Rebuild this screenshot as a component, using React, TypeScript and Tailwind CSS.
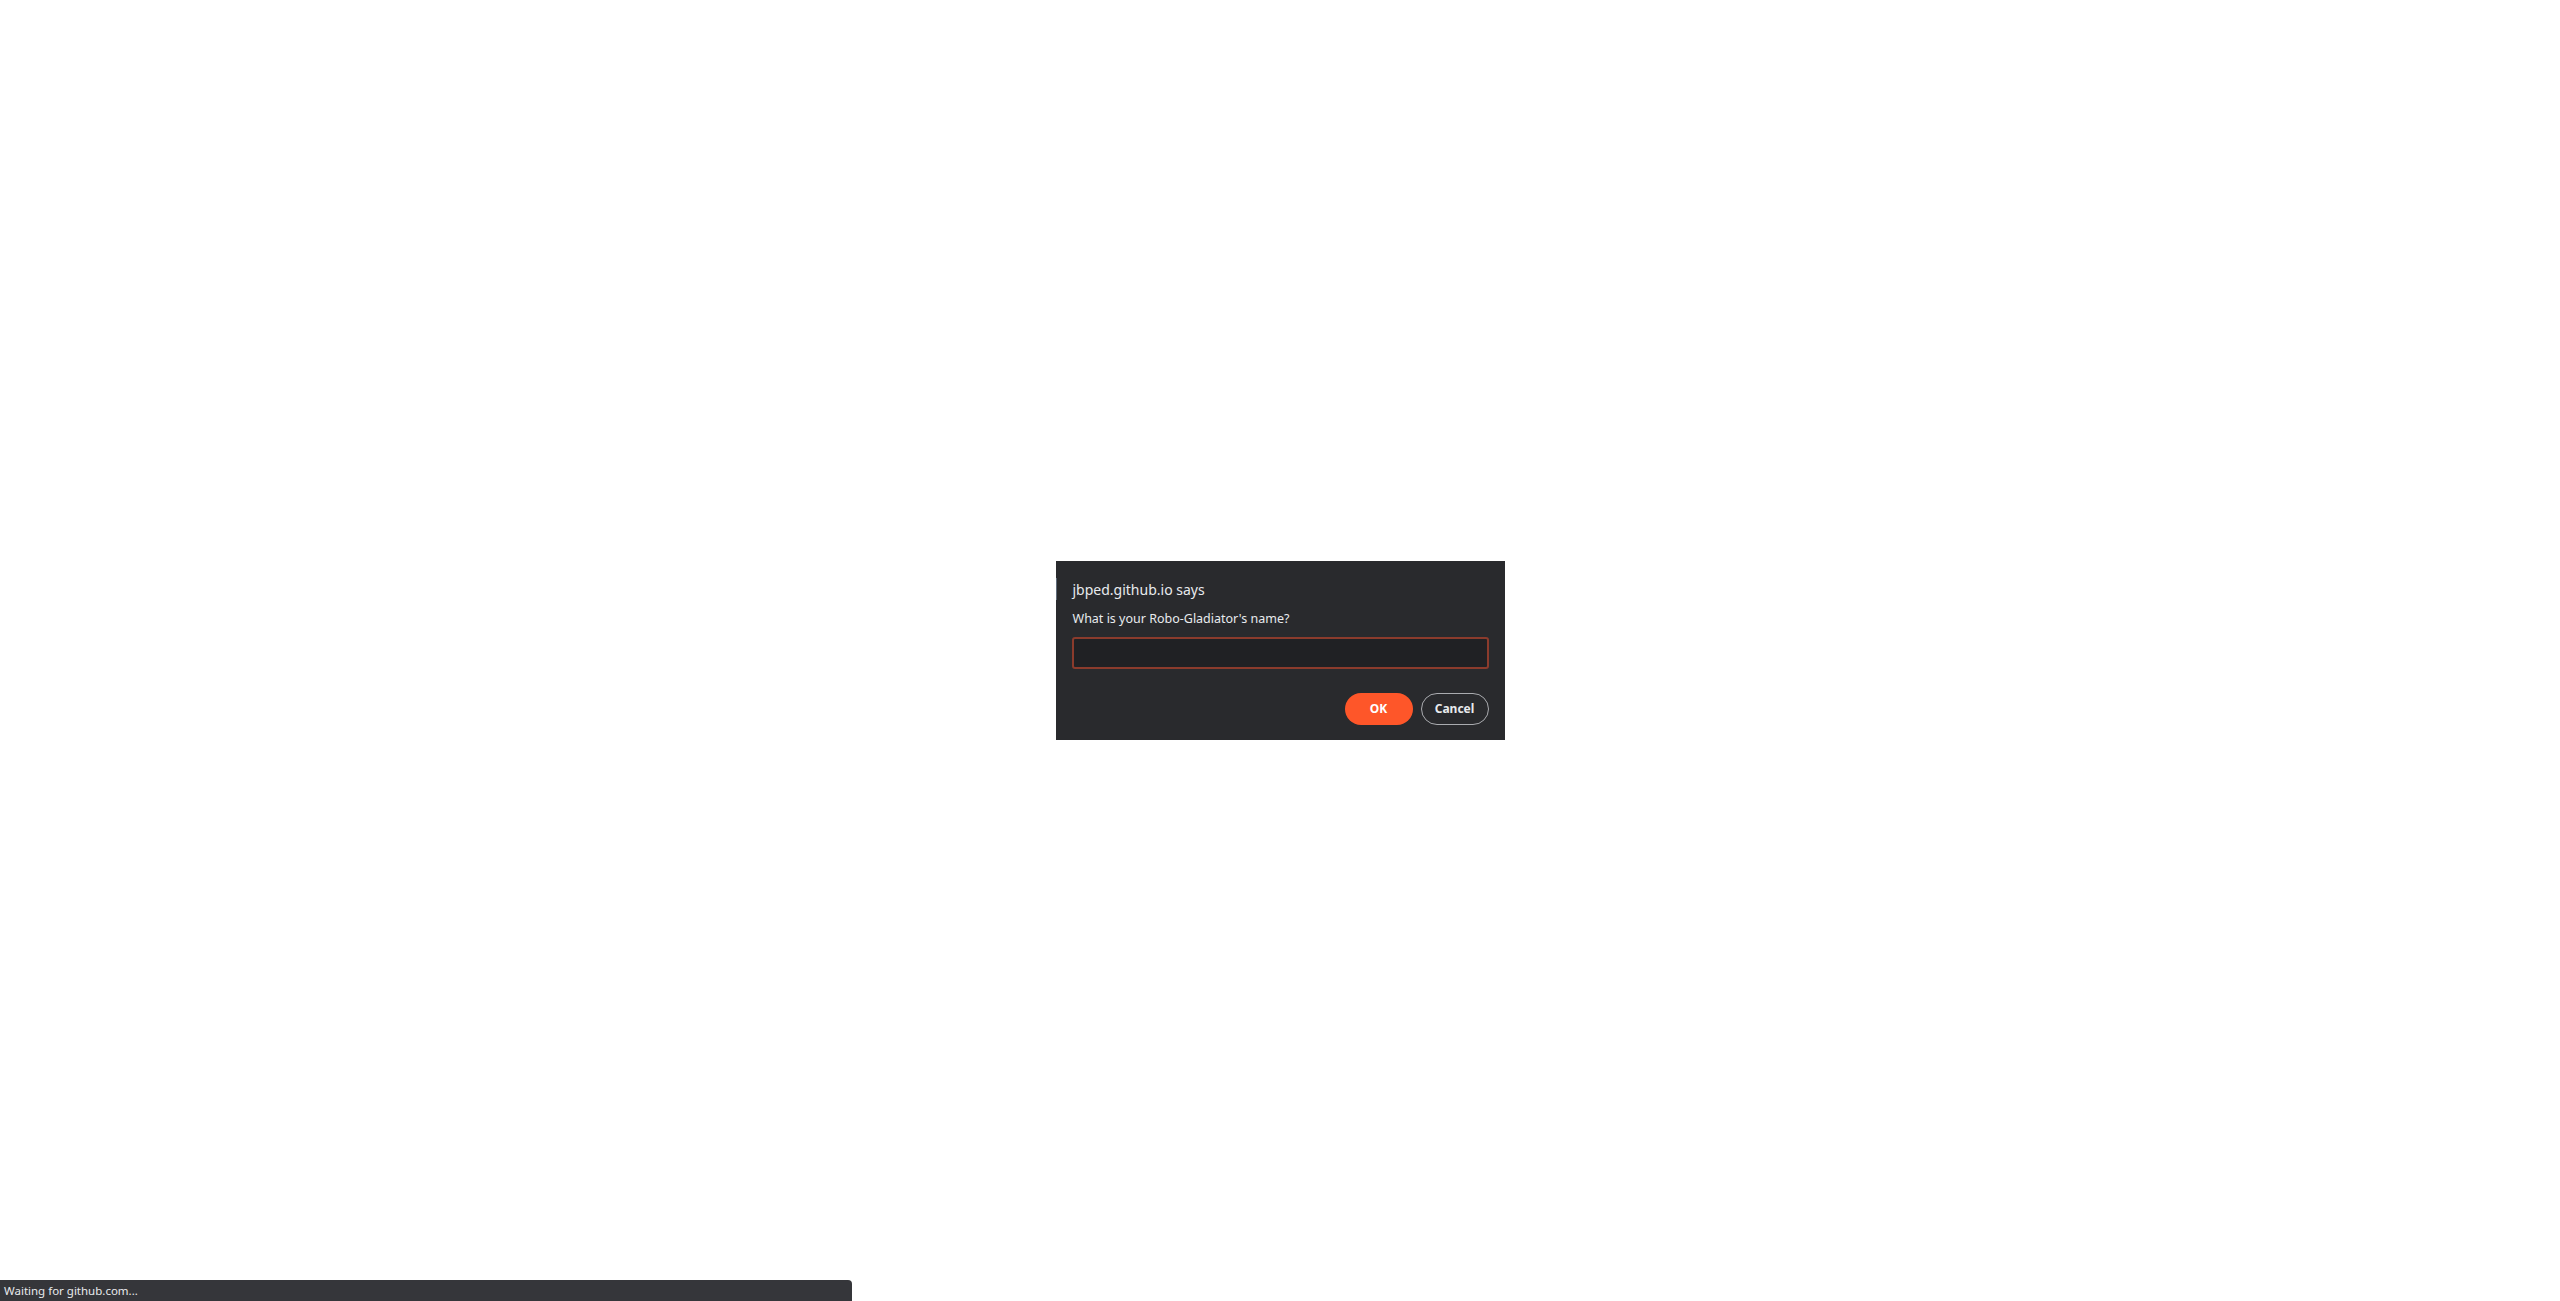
export default function App() {
  return (
    <div className="relative h-[1301px] w-full bg-white font-['Noto_Sans',sans-serif]">
      <div className="flex h-full items-center justify-center">
        {/* prompt dialog */}
        <div className="relative w-[449px] h-[179px] bg-[#292a2d] pl-[17px] pr-4 pt-[19px] pb-[15px] flex flex-col">
          <div className="absolute left-0 top-[17px] h-[22px] w-px bg-[#5f6b7a]" />
          <div className="text-[14px] leading-[20px] text-[#e8eaed]">jbped.github.io says</div>
          <div className="mt-[10px] text-[12.5px] leading-[18px] text-[#e8eaed]">
            What is your Robo-Gladiator's name?
          </div>
          <input
            className="mt-[9px] -ml-px h-[32px] w-[417px] rounded-[3px] border-2 border-[#8b3b2c] bg-[#202124] px-2 text-[13px] text-[#e8eaed] outline-none"
            type="text"
          />
          <div className="mt-auto flex justify-end gap-2">
            <button className="h-[32px] w-[68px] rounded-full bg-[#fe5629] text-[12px] font-bold text-white">
              OK
            </button>
            <button className="h-[32px] w-[68px] rounded-full border border-[#a9abaf] text-[12px] font-bold text-[#e8eaed]">
              Cancel
            </button>
          </div>
        </div>
      </div>

      {/* status bubble */}
      <div className="absolute bottom-0 left-0 h-[21px] w-[852px] rounded-tr-[4px] bg-[#35363a] pl-1 text-[11.5px] leading-[21px] text-[#e8eaed]">
        Waiting for github.com...
      </div>
    </div>
  )
}
